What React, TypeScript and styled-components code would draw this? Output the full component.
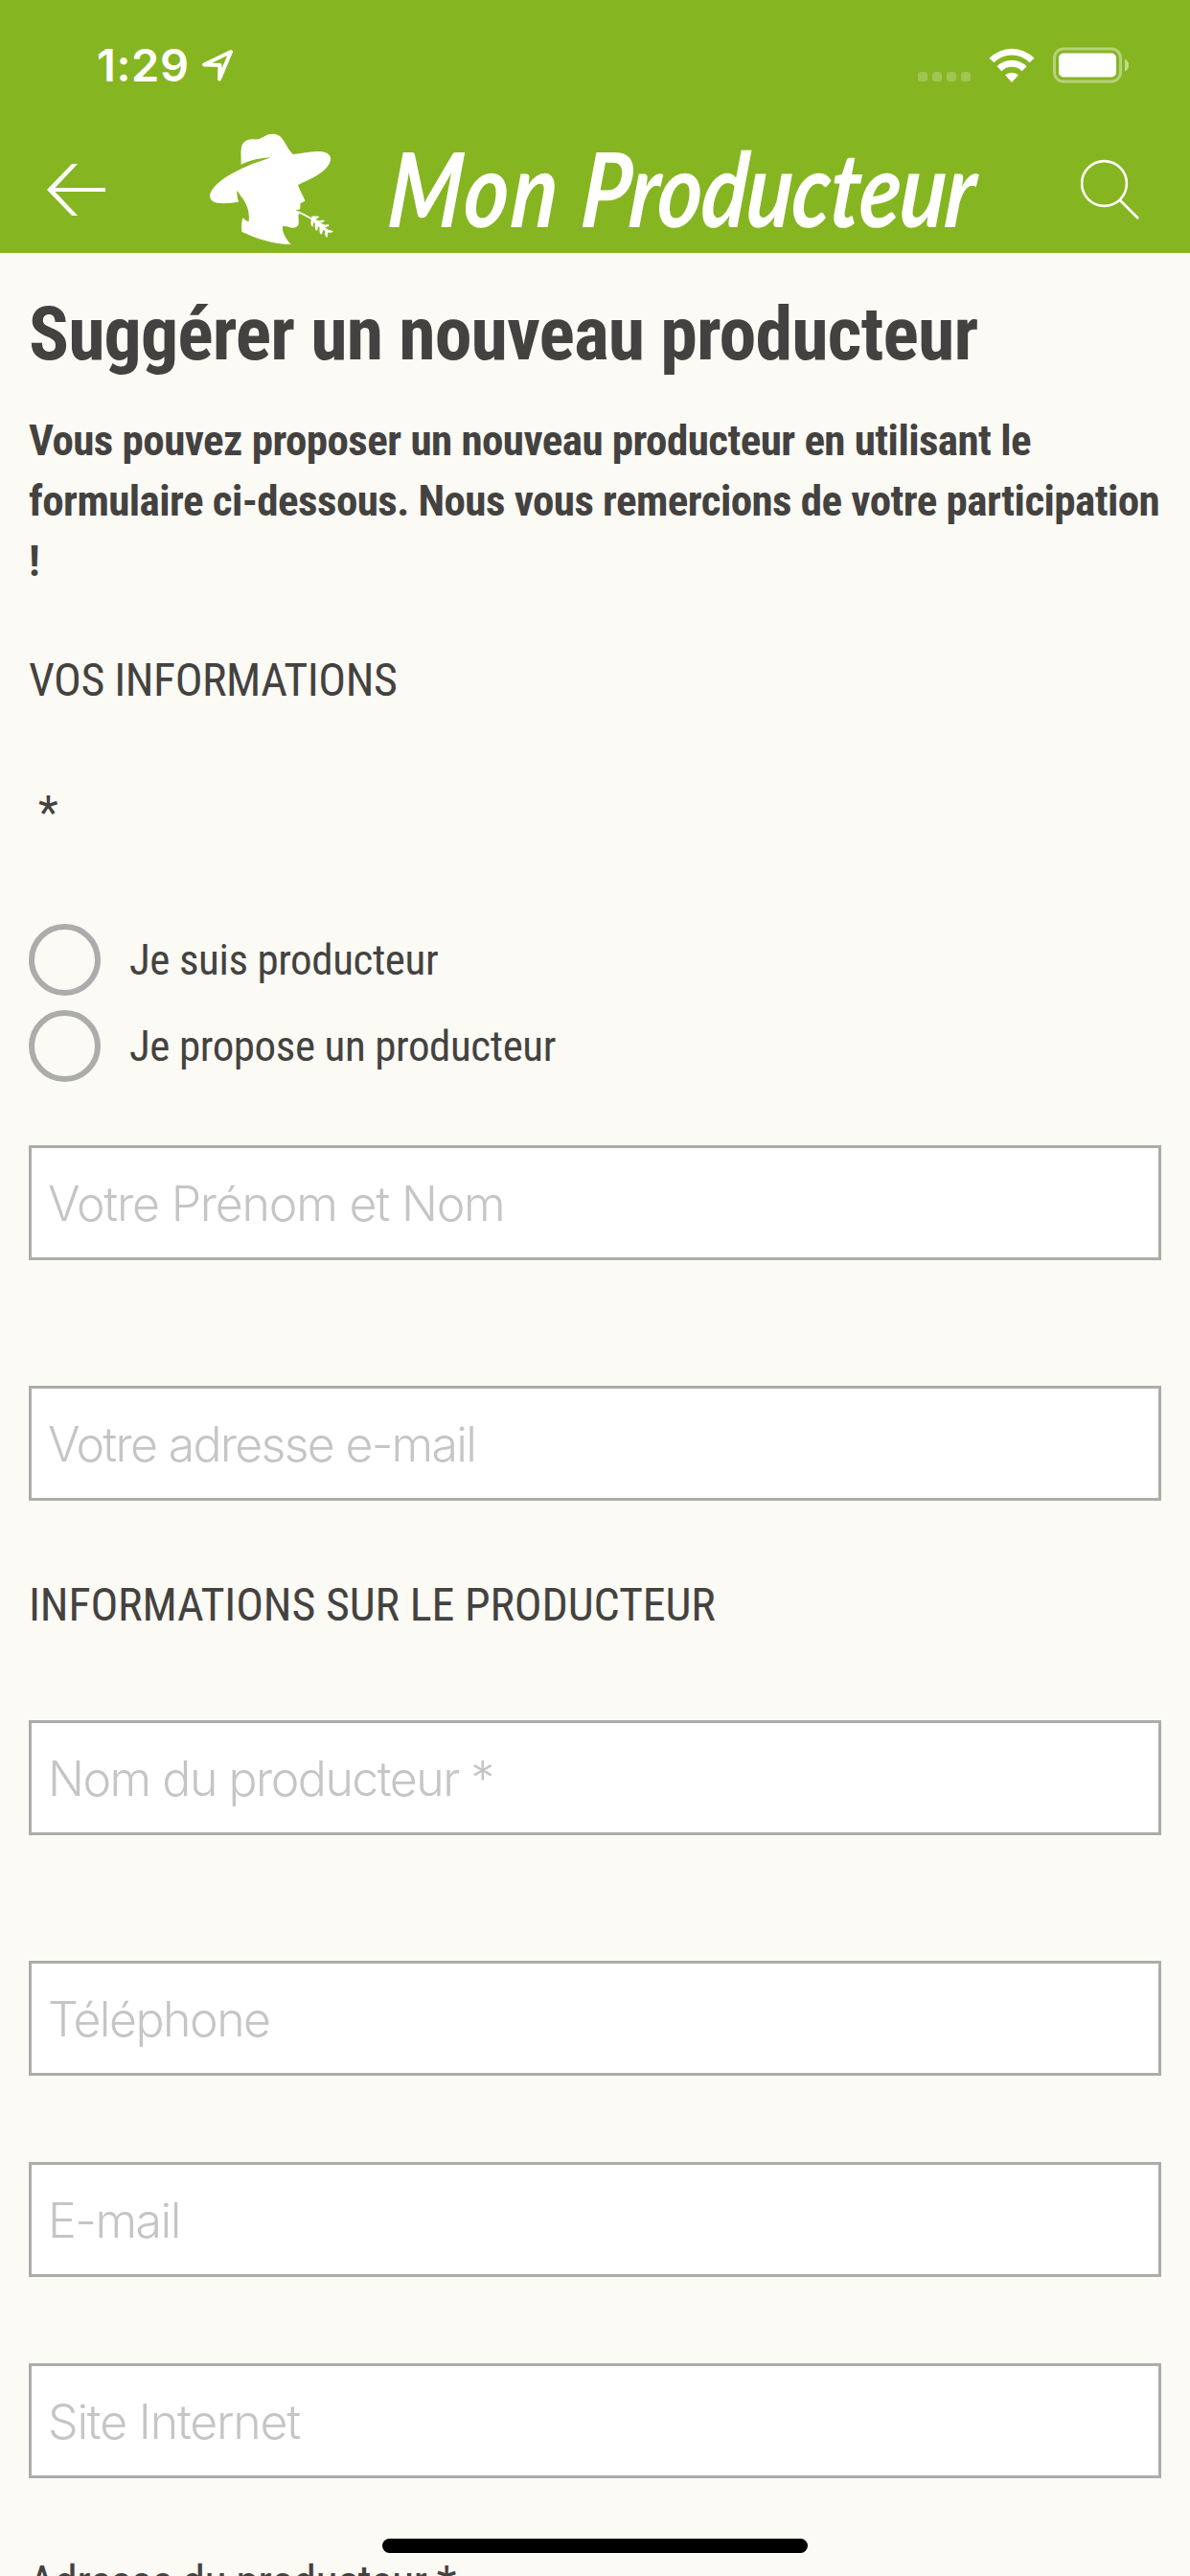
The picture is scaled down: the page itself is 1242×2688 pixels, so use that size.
import React from "react";
import styled, { createGlobalStyle } from "styled-components";

const green = "#86b522";
const ink = "#444240";
const line = "#acacab";

const GlobalStyle = createGlobalStyle`
  *, *::before, *::after { box-sizing: border-box; }
  body { margin: 0; background: #fbfaf5; }
`;

const Screen = styled.div`
  position: relative;
  display: flex;
  flex-direction: column;
  width: 1242px;
  height: 2688px;
  overflow: hidden;
  background: #fbfaf5;
  color: ${ink};
  font-family: "Roboto Condensed", Roboto, sans-serif;
`;

const Header = styled.header`
  flex: none;
  height: 264px;
  background: ${green};
  color: #fff;
`;

const StatusBar = styled.div`
  display: flex;
  justify-content: space-between;
  height: 132px;
  padding: 0 63px 0 101px;
`;

const StatusGroup = styled.div<{ $gap: number }>`
  display: flex;
  align-items: center;
  gap: ${(p) => p.$gap}px;
  height: 136px;
`;

const Clock = styled.span`
  font: 600 47px/60px Inter, sans-serif;
  letter-spacing: 0.6px;
`;

const SignalDots = styled.span`
  display: flex;
  gap: 5px;
  margin-top: 24px;
`;

const Dot = styled.i`
  width: 10px;
  height: 10px;
  border-radius: 3px;
  background: rgba(255, 255, 255, 0.22);
`;

const NavBar = styled.nav`
  display: flex;
  align-items: center;
  height: 132px;
  padding: 0 52px 0 48px;
`;

const IconButton = styled.button`
  display: flex;
  flex: none;
  padding: 0;
  border: 0;
  background: none;
  color: inherit;
`;

const Brand = styled.div`
  display: flex;
  flex: 1;
  align-items: center;
  margin: -6px 0 0 90px;
`;

const BrandName = styled.span`
  width: 620px;
  margin-left: 43px;
  font: italic 700 108px/130px Lato, sans-serif;
  white-space: nowrap;
  transform: scaleX(0.82) skewX(-6deg);
  transform-origin: 0 80%;
`;

const BrandWord = styled.span<{ $tracking: number }>`
  letter-spacing: ${(p) => p.$tracking}px;
`;

const Content = styled.main`
  display: flex;
  flex-direction: column;
  padding: 40px 30px 0;
`;

const Title = styled.h1`
  margin: 0;
  font-size: 78px;
  font-weight: 700;
  line-height: 90px;
  letter-spacing: -0.92px;
`;

const Intro = styled.p`
  margin: 34px -10px 0 0;
  font-size: 45px;
  font-weight: 700;
  line-height: 63px;
  letter-spacing: -0.55px;
`;

const SectionTitle = styled.h2<{ $top: number; $tracking: number }>`
  margin: ${(p) => p.$top}px 0 0;
  font-size: 48px;
  font-weight: 400;
  line-height: 60px;
  letter-spacing: ${(p) => p.$tracking}px;
  text-transform: uppercase;
`;

const FieldLabel = styled.div<{ $top: number; $indent?: number }>`
  margin-top: ${(p) => p.$top}px;
  padding-left: ${(p) => p.$indent ?? 0}px;
  font-size: 48px;
  line-height: 60px;
  letter-spacing: -0.65px;
`;

const RadioList = styled.div`
  display: flex;
  flex-direction: column;
  gap: 15px;
  margin-top: 86px;
`;

const RadioRow = styled.label`
  display: flex;
  align-items: center;
  gap: 30px;
  height: 75px;
  font-size: 45px;
  line-height: 75px;
  letter-spacing: -0.4px;
`;

const Radio = styled.input`
  flex: none;
  appearance: none;
  width: 75px;
  height: 75px;
  margin: 0;
  border: 6px solid ${line};
  border-radius: 50%;
`;

const Field = styled.input<{ $top: number; $tracking?: number }>`
  flex: none;
  width: 100%;
  height: 120px;
  margin: ${(p) => p.$top}px 0 0;
  padding: 2px 17px 0;
  border: 3px solid ${line};
  border-radius: 0;
  background: #fff;
  color: ${ink};
  font: 300 50px/60px Inter, sans-serif;
  letter-spacing: ${(p) => p.$tracking ?? -1.5}px;
  &::placeholder { color: #c5c5c7; opacity: 1; }
`;

const HomeIndicator = styled.div`
  position: absolute;
  bottom: 24px;
  left: 399px;
  width: 444px;
  height: 15px;
  border-radius: 8px;
  background: #000;
`;

const LocationIcon = () => (
  <svg width="36" height="36" viewBox="0 0 36 36" fill="none" stroke="#fff" strokeWidth="4" strokeLinejoin="round">
    <path d="M32 4 4 17.5 20.5 18 20 32.5Z" />
  </svg>
);

const WifiIcon = () => (
  <svg width="48" height="36" viewBox="0 0 48 36" fill="#fff">
    <path d="M0.5 10.7a33 33 0 0 1 47 0L42.5 15.2a26 26 0 0 0-37 0Z" />
    <path d="M8.5 19.2a22 22 0 0 1 31 0L34.6 24.2a15 15 0 0 0-21.2 0Z" />
    <path d="M24 36 17 28.3a10.5 10.5 0 0 1 14 0Z" />
  </svg>
);

const BatteryIcon = () => (
  <svg width="80" height="38" viewBox="0 0 80 38">
    <rect x="1.5" y="2" width="69" height="34" rx="9.5" fill="none" stroke="#fff" strokeOpacity=".4" strokeWidth="3" />
    <rect x="6" y="6.5" width="60" height="25" rx="5" fill="#fff" />
    <path d="M75 12.5q4 2 4 6.5t-4 6.5Z" fill="#fff" fillOpacity=".5" />
  </svg>
);

const BackIcon = () => (
  <svg width="62" height="54" viewBox="0 0 62 54" fill="#fff">
    <path d="M27 0h6L9.5 25H62v4H9.5L33 54h-6L1 27Z" />
  </svg>
);

const SearchIcon = () => (
  <svg width="62" height="64" viewBox="0 0 62 64" fill="none" stroke="#fff" strokeWidth="2.6">
    <circle cx="24.5" cy="25.5" r="23.4" />
    <path d="M40.5 42.5 60 62" />
  </svg>
);

const FarmerLogo = () => (
  <svg width="160" height="130" viewBox="0 0 480 390" fill="#fff">
    <path d="M155 125C155 105 153 80 157 67C163 51 177 45 192 46C207 47 216 45 224 39C238 29 257 26 271 33C280 37 284 44 289 52C298 67 306 83 317 93C345 91 371 83 398 84C424 84 440 96 434 115C427 139 398 158 369 172C354 179 343 184 333 189C337 203 348 220 355 238C352 243 343 244 340 248C341 256 340 262 338 266L327 266L329 269L339 273C355 280 367 287 376 293C374 288 375 285 390 287C399 286 401 290 395 293C391 296 387 296 385 297C391 298 397 301 400 301C405 298 412 299 417 300C412 307 405 308 401 308C409 309 413 312 419 314C423 311 429 313 431 315C427 321 421 322 415 320C420 324 425 327 429 330C434 330 440 332 444 335C437 339 430 339 426 338C428 344 425 349 424 354C418 351 416 342 418 334L411 329C411 336 409 342 405 344C401 340 399 334 401 323L395 317C396 325 394 331 391 333C386 327 385 319 387 311L382 304C382 312 381 319 378 320C372 314 373 305 374 297C362 290 350 283 336 278C332 287 337 299 335 309C333 326 313 325 299 319L286 318C280 331 294 356 311 375C254 375 195 354 157 335C156 321 155 304 161 292C167 298 174 304 179 303C182 274 174 250 160 232C151 219 146 211 142 207C141 219 144 231 147 242C124 246 100 248 80 245C58 242 52 224 62 208C77 180 116 158 150 141C183 125 222 112 249 103C217 104 180 112 155 125Z" />
  </svg>
);

export default function App() {
  return (
    <Screen>
      <GlobalStyle />
      <Header>
        <StatusBar>
          <StatusGroup $gap={11}>
            <Clock>1:29</Clock>
            <LocationIcon />
          </StatusGroup>
          <StatusGroup $gap={19}>
            <SignalDots><Dot /><Dot /><Dot /><Dot /></SignalDots>
            <WifiIcon />
            <BatteryIcon />
          </StatusGroup>
        </StatusBar>
        <NavBar>
          <IconButton aria-label="Retour"><BackIcon /></IconButton>
          <Brand>
            <FarmerLogo />
            <BrandName>
              <BrandWord $tracking={3.5}>Mon </BrandWord>
              <BrandWord $tracking={-0.8}>Producteur</BrandWord>
            </BrandName>
          </Brand>
          <IconButton aria-label="Rechercher"><SearchIcon /></IconButton>
        </NavBar>
      </Header>
      <Content>
        <Title>Suggérer un nouveau producteur</Title>
        <Intro>
          Vous pouvez proposer un nouveau producteur en utilisant le formulaire ci-dessous. Nous vous remercions de
          votre participation !
        </Intro>
        <SectionTitle $top={63} $tracking={-0.5}>Vos informations</SectionTitle>
        <FieldLabel $top={78} $indent={10}>*</FieldLabel>
        <RadioList>
          <RadioRow><Radio type="radio" name="role" />Je suis producteur</RadioRow>
          <RadioRow><Radio type="radio" name="role" />Je propose un producteur</RadioRow>
        </RadioList>
        <Field $top={66} $tracking={-1.2} placeholder="Votre Prénom et Nom" />
        <Field $top={131} $tracking={-1.7} placeholder="Votre adresse e-mail" />
        <SectionTitle $top={79} $tracking={-0.15}>Informations sur le producteur</SectionTitle>
        <Field $top={90} placeholder="Nom du producteur *" />
        <Field $top={131} placeholder="Téléphone" />
        <Field $top={90} placeholder="E-mail" />
        <Field $top={90} $tracking={-1.2} placeholder="Site Internet" />
        <FieldLabel $top={79}>Adresse du producteur *</FieldLabel>
      </Content>
      <HomeIndicator />
    </Screen>
  );
}
